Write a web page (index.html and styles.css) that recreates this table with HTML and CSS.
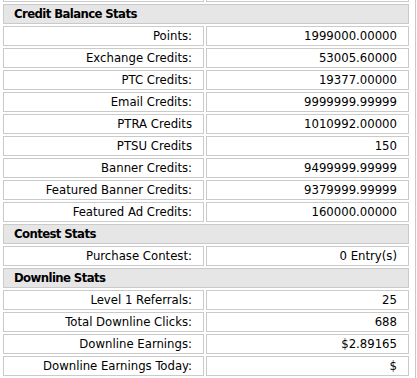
FILE: index.html
```html
<!DOCTYPE html>
<html>
<head>
    <title>Account Stats</title>
    <link rel="stylesheet" href="styles.css">
</head>
<body>
    <div class="panel">
        <table class="stats">
            <tr>
                <td class="label"></td>
                <td class="value"></td>
            </tr>
            <tr><td class="section" colspan="2">Credit Balance Stats</td></tr>
            <tr><td class="label">Points:</td><td class="value">1999000.00000</td></tr>
            <tr><td class="label">Exchange Credits:</td><td class="value">53005.60000</td></tr>
            <tr><td class="label">PTC Credits:</td><td class="value">19377.00000</td></tr>
            <tr><td class="label">Email Credits:</td><td class="value">9999999.99999</td></tr>
            <tr><td class="label">PTRA Credits</td><td class="value">1010992.00000</td></tr>
            <tr><td class="label">PTSU Credits</td><td class="value">150</td></tr>
            <tr><td class="label">Banner Credits:</td><td class="value">9499999.99999</td></tr>
            <tr><td class="label">Featured Banner Credits:</td><td class="value">9379999.99999</td></tr>
            <tr><td class="label">Featured Ad Credits:</td><td class="value">160000.00000</td></tr>

            <tr><td class="section" colspan="2">Contest Stats</td></tr>
            <tr><td class="label">Purchase Contest:</td><td class="value">0 Entry(s)</td></tr>

            <tr><td class="section" colspan="2">Downline Stats</td></tr>
            <tr><td class="label">Level 1 Referrals:</td><td class="value">25</td></tr>
            <tr><td class="label">Total Downline Clicks:</td><td class="value">688</td></tr>
            <tr><td class="label">Downline Earnings:</td><td class="value">$2.89165</td></tr>
            <tr><td class="label">Downline Earnings Today:</td><td class="value">$</td></tr>
        </table>
    </div>
</body>
</html>
```

FILE: styles.css
```css
body, html {
    margin: 0;
    background-color: #fff;
    font-family: "DejaVu Sans Condensed", "DejaVu Sans", sans-serif;
    font-size: 13px;
    color: #000;
    overflow: hidden;
}

/* scrolled view: the row above the first heading is cut off at the top */
.panel {
    width: 415px;
    height: 398px;
    margin-top: -20px;
    border-right: 1px solid #c8c8c8;
}

.stats {
    margin-left: 1px;
    width: 410px;
    table-layout: fixed;
    border-collapse: separate;
    border-spacing: 2px;
}

.stats td {
    box-sizing: border-box;
    height: 20px;
    padding: 0 11px 0 10px;
    line-height: 18px;
    border: 1px solid #cacaca;
    white-space: nowrap;
}

.label {
    width: 201px;
    text-align: right;
}

.value {
    text-align: right;
}

.section {
    background-color: #e6e6e6;
    font-weight: bold;
    text-align: left;
    letter-spacing: -0.6px;
}
```
